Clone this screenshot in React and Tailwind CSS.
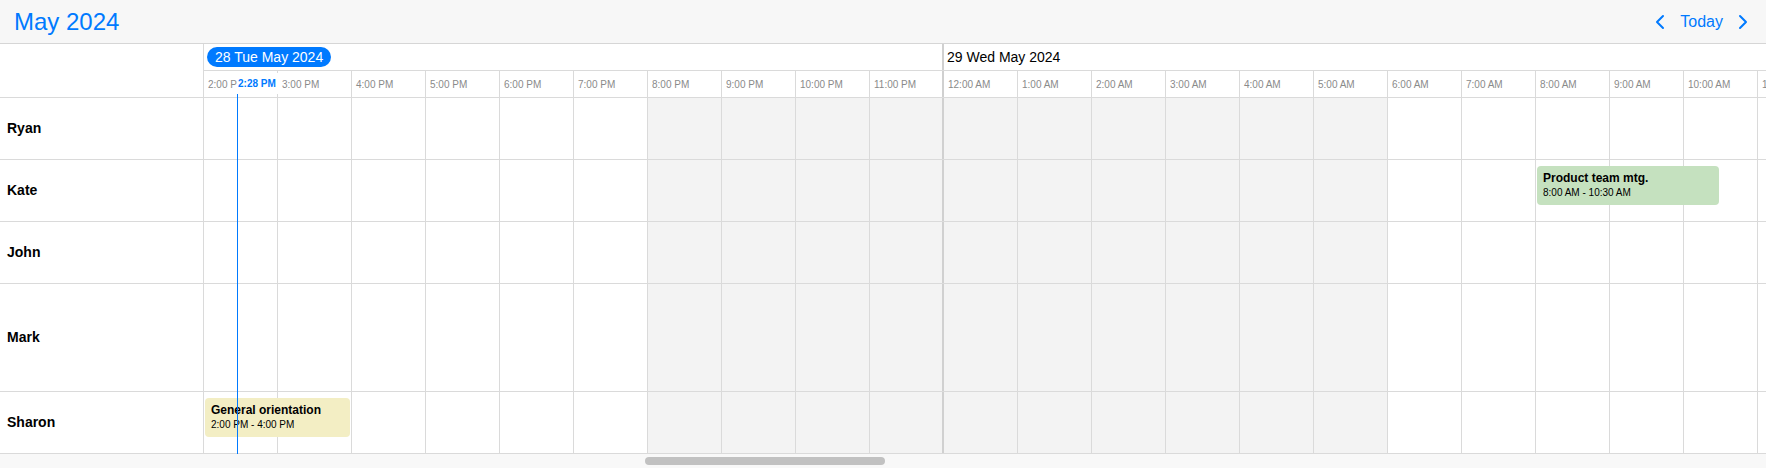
import { ChevronLeft, ChevronRight } from "lucide-react";

const COL = 74;

const horas = [
  "2:00 PM", "3:00 PM", "4:00 PM", "5:00 PM", "6:00 PM", "7:00 PM",
  "8:00 PM", "9:00 PM", "10:00 PM", "11:00 PM",
  "12:00 AM", "1:00 AM", "2:00 AM", "3:00 AM", "4:00 AM", "5:00 AM",
  "6:00 AM", "7:00 AM", "8:00 AM", "9:00 AM", "10:00 AM", "11:00 AM",
];

// filas con su alto (incluye el borde inferior)
const personas = [
  { nombre: "Ryan", alto: "h-[62px]" },
  { nombre: "Kate", alto: "h-[62px]" },
  { nombre: "John", alto: "h-[62px]" },
  { nombre: "Mark", alto: "h-[108px]" },
  { nombre: "Sharon", alto: "h-[62px]" },
];

const eventos = [
  { persona: "Kate", titulo: "Product team mtg.", rango: "8:00 AM - 10:30 AM", inicio: 18, duracion: 2.5, color: "bg-[#c5e1bf]" },
  { persona: "Sharon", titulo: "General orientation", rango: "2:00 PM - 4:00 PM", inicio: 0, duracion: 2, color: "bg-[#f3eec4]" },
];

const fueraDeHorario = (i) => i >= 6 && i <= 15;

function Celda({ i, children, className = "" }) {
  return (
    <div
      className={`w-[74px] shrink-0 h-full ${
        i === 9 ? "border-r-2 border-[#d0d0d0]" : "border-r border-[#dadada]"
      } ${className}`}
    >
      {children}
    </div>
  );
}

export default function App() {
  return (
    <div className="w-[1766px] h-[468px] flex flex-col bg-white overflow-hidden font-['Liberation_Sans',Arial,sans-serif]">
      {/* Cabecera */}
      <header className="h-[44px] shrink-0 flex items-center justify-between bg-[#f7f7f7] border-b border-[#d6d6d6] pl-[14px] pr-[11px]">
        <h1 className="text-[24px] text-[#007aff] leading-none">May 2024</h1>
        <div className="flex items-center gap-2 text-[#007aff]">
          <ChevronLeft className="w-6 h-6" strokeWidth={2} />
          <span className="text-[16px]">Today</span>
          <ChevronRight className="w-6 h-6" strokeWidth={2} />
        </div>
      </header>

      <div className="flex h-[410px] shrink-0">
        {/* Columna de nombres */}
        <div className="w-[204px] shrink-0 border-r border-[#dadada]">
          <div className="h-[54px] border-b border-[#dadada]" />
          {personas.map((p) => (
            <div key={p.nombre} className={`${p.alto} border-b border-[#dadada] flex items-center pl-[7px]`}>
              <span className="text-[14px] font-bold text-black">{p.nombre}</span>
            </div>
          ))}
        </div>

        {/* Línea de tiempo */}
        <div className="relative flex-1 overflow-hidden">
          <div className="w-max">
            <div className="flex h-[27px] border-b border-[#dadada]">
              <div className="w-[740px] shrink-0 border-r-2 border-[#d0d0d0] flex items-center pl-[3px]">
                <span className="h-[20px] px-2 rounded-full bg-[#007aff] text-white text-[14px] flex items-center">
                  28 Tue May 2024
                </span>
              </div>
              <div className="w-[888px] shrink-0 flex items-center pl-[3px]">
                <span className="text-[14px] text-black">29 Wed May 2024</span>
              </div>
            </div>

            <div className="flex h-[27px] border-b border-[#dadada]">
              {horas.map((h, i) => (
                <Celda key={h + i} i={i} className="flex items-center pl-[4px]">
                  <span className="text-[10px] text-[#8a8a8a] whitespace-nowrap">{h}</span>
                </Celda>
              ))}
            </div>

            {personas.map((p) => (
              <div key={p.nombre} className={`relative flex ${p.alto} border-b border-[#dadada]`}>
                {horas.map((h, i) => (
                  <Celda key={h + i} i={i} className={fueraDeHorario(i) ? "bg-[#f3f3f3]" : ""} />
                ))}
                {eventos
                  .filter((e) => e.persona === p.nombre)
                  .map((e) => (
                    <div
                      key={e.titulo}
                      className={`absolute top-[6px] h-[39px] rounded-[4px] ${e.color} pl-[6px] pt-[5px]`}
                      style={{ left: e.inicio * COL + 1, width: e.duracion * COL - 3 }}
                    >
                      <div className="text-[12px] font-bold leading-[15px] text-black whitespace-nowrap">{e.titulo}</div>
                      <div className="text-[10px] leading-[13px] text-black whitespace-nowrap">{e.rango}</div>
                    </div>
                  ))}
              </div>
            ))}
          </div>

          {/* Hora actual */}
          <div className="absolute left-[33px] top-[49px] bottom-0 w-px bg-[#007aff]" />
          <div className="absolute left-[33px] top-[29px] h-[21px] flex items-center bg-white pl-px pr-[2px]">
            <span className="text-[10px] font-bold text-[#007aff]">2:28 PM</span>
          </div>
        </div>
      </div>

      {/* Barra de desplazamiento */}
      <div className="h-[14px] shrink-0 bg-[#f8f8f8] flex items-center">
        <div className="ml-[645px] w-[240px] h-[8px] rounded-full bg-[#c1c1c1]" />
      </div>
    </div>
  );
}
